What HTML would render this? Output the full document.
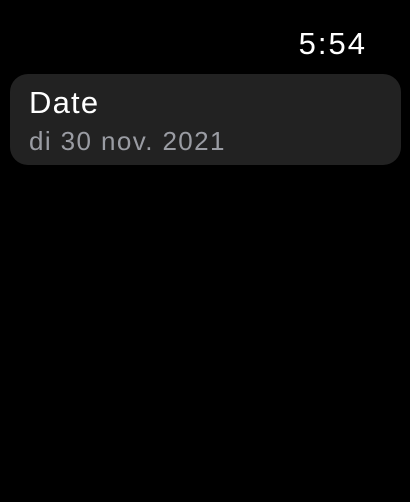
<!DOCTYPE html>
<html><head><style>
html,body{margin:0;width:410px;height:502px;background:#000;overflow:hidden;font-family:"Liberation Sans",sans-serif}
.t{position:absolute;right:43px;top:26px;color:#fff;font-size:31px;letter-spacing:2px}
.card{position:absolute;left:10px;top:74px;width:391px;height:91px;background:#222;border-radius:18px}
.a{position:absolute;left:19px;top:11px;color:#fff;font-size:31px;letter-spacing:1.2px}
.b{position:absolute;left:19px;top:52px;color:#9a9ca3;font-size:26px;letter-spacing:1.4px}
</style></head><body>
<div class="t">5:54</div>
<div class="card"><div class="a">Date</div><div class="b">di 30 nov. 2021</div></div>
</body></html>
